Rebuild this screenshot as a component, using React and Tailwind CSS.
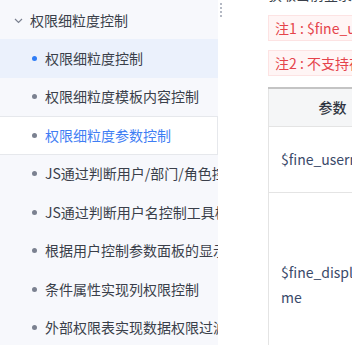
const FONT = { fontFamily: '"Noto Sans CJK SC", "Noto Sans", sans-serif' };

const items = [
  { label: '权限细粒度控制', state: 'active' },
  { label: '权限细粒度模板内容控制' },
  { label: '权限细粒度参数控制', state: 'selected' },
  { label: 'JS通过判断用户/部门/角色控制按钮' },
  { label: 'JS通过判断用户名控制工具栏按钮' },
  { label: '根据用户控制参数面板的显示' },
  { label: '条件属性实现列权限控制' },
  { label: '外部权限表实现数据权限过滤' },
];

function NavItem({ label, state }) {
  const row =
    state === 'active'
      ? 'bg-[#ebf1fc]'
      : state === 'selected'
      ? 'bg-white border-y border-r border-[#e6e8ec]'
      : '';
  const dot = state === 'active' ? 'bg-[#2f7df6]' : 'bg-[#7b8190]';
  const text = state === 'selected' ? 'text-[#3f7ef4]' : 'text-[#3a3f4a]';
  return (
    <div className={`h-[38.5px] flex items-center whitespace-nowrap overflow-hidden ${row}`}>
      <span className={`ml-[32px] w-[5px] h-[5px] rounded-full shrink-0 ${dot}`} />
      <span className={`ml-[8px] text-[14px] ${text}`}>{label}</span>
    </div>
  );
}

function Sidebar() {
  return (
    <aside className="w-[218px] shrink-0 bg-[#f7f8fc] h-full">
      <div className="h-[39px] flex items-center pt-[2px] whitespace-nowrap">
        <svg className="ml-[14px]" width="9" height="6" viewBox="0 0 9 6" fill="none">
          <path d="M1 1l3.5 3.5L8 1" stroke="#7b8190" strokeWidth="1.2" />
        </svg>
        <span className="ml-[7px] text-[14px] text-[#3a3f4a]">权限细粒度控制</span>
      </div>
      {items.map((it) => (
        <NavItem key={it.label} {...it} />
      ))}
    </aside>
  );
}

function Handle() {
  return (
    <div className="w-[3px] shrink-0 flex flex-col gap-[2px] pt-[3px] ml-[2px]">
      {[0, 1, 2, 3].map((i) => (
        <span key={i} className="w-[2px] h-[2px] bg-[#b4b9c4]" />
      ))}
    </div>
  );
}

function Note({ children }) {
  return (
    <div className="h-[26px] flex items-center px-[6px] bg-[#fff5f5] border border-[#fde3e3] text-[#e5434b] text-[14px] whitespace-nowrap">
      {children}
    </div>
  );
}

function Content() {
  return (
    <main className="flex-1 min-w-0 pl-[45px]">
      <div className="w-[420px]">
        <p className="mt-[-16px] h-[18px] text-[14px] text-[#3a3f4a] whitespace-nowrap">获取当前登录用户的参数信息如下：</p>
        <div className="mt-[13px] flex flex-col gap-[9px]">
          <Note>注1 : $fine_username 为系统参数</Note>
          <Note>注2 : 不支持在参数面板中使用</Note>
        </div>
        <table className="mt-[11px] border-collapse text-[14px] text-[#333]">
          <thead>
            <tr className="border-t-2 border-[#c4c4c4] bg-[#f5f6f7]">
              <th className="w-[128px] h-[38px] border-l border-[#e4e4e4] font-medium text-[#2f3440] text-center">参数</th>
              <th className="w-[292px] border-l border-[#e4e4e4] font-medium text-[#2f3440]">说明</th>
            </tr>
          </thead>
          <tbody>
            <tr className="border-t border-[#e4e4e4]">
              <td className="h-[66px] border-l border-[#e4e4e4] pl-[12px] text-[#3a4a6a]">$fine_username</td>
              <td className="border-l border-[#e4e4e4] pl-[12px]">当前用户名</td>
            </tr>
            <tr className="border-t border-[#e4e4e4]">
              <td className="h-[185px] border-l border-[#e4e4e4] pl-[12px] text-[#3a4a6a] leading-[25px]">
                $fine_displayna
                <br />
                me
              </td>
              <td className="border-l border-[#e4e4e4] pl-[12px]">当前用户显示名</td>
            </tr>
          </tbody>
        </table>
      </div>
    </main>
  );
}

export default function App() {
  return (
    <div className="w-[352px] h-[345px] overflow-hidden flex bg-white" style={FONT}>
      <Sidebar />
      <Handle />
      <Content />
    </div>
  );
}
